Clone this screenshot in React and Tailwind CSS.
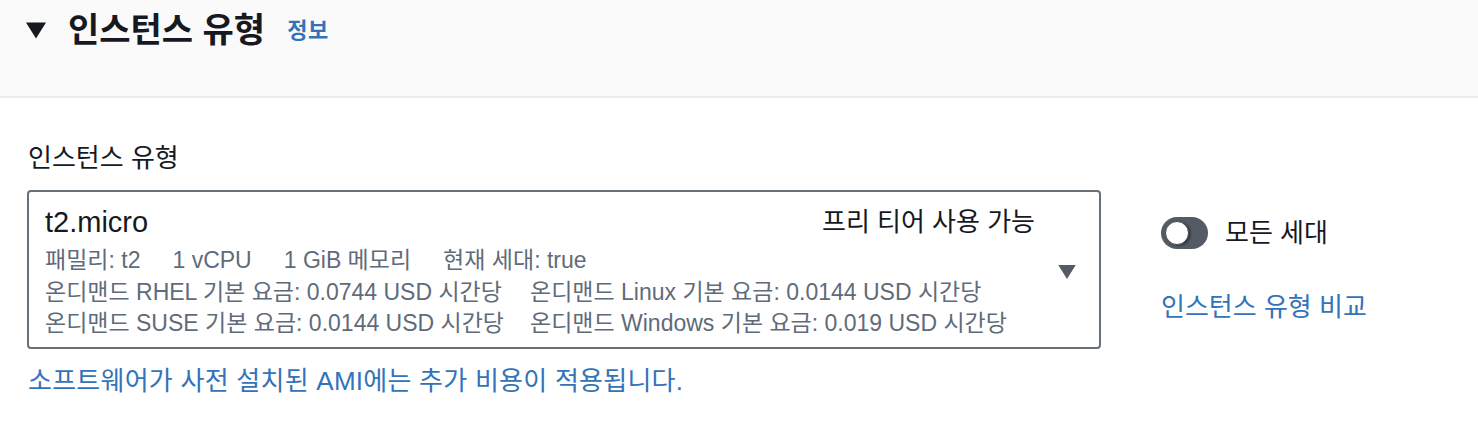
const FONT = { fontFamily: '"Liberation Sans", "Noto Sans CJK KR", sans-serif' };

function Caret({ className }) {
  return (
    <svg viewBox="0 0 20 16" className={className} fill="currentColor">
      <path d="M0 0 L20 0 L10 16 Z" />
    </svg>
  );
}

export default function App() {
  return (
    <div className="w-[1478px] h-[430px] bg-white text-[#16191f]" style={FONT}>
      {/* Header */}
      <div className="h-[98px] bg-[#fafafa] border-b-2 border-[#eaeded] flex items-start pt-[12px] pl-[26px]">
        <div className="flex items-center h-[36px]">
          <Caret className="w-[20px] h-[17px] text-[#16191f]" />
          <h2 className="ml-[22px] text-[34px] font-bold leading-[36px]">인스턴스 유형</h2>
          <a className="ml-[22px] text-[22px] font-bold tracking-[0.5px] text-[#3273b9] leading-[36px] pt-[2px]">정보</a>
        </div>
      </div>

      {/* Body */}
      <div className="pl-[27px] pt-[44px]">
        <div className="text-[26px] leading-[32px] mb-[16px] pl-[1px]">인스턴스 유형</div>

        <div className="flex items-start gap-[60px]">
          <div>
            <div className="w-[1074px] border-2 border-[#687078] rounded-[4px] flex items-center pl-[16px] pr-[22px] pt-[12px] pb-[7px]">
              <div className="flex-1">
                <div className="flex justify-between items-center leading-[36px]">
                  <span className="text-[29px]">t2.micro</span>
                  <span className="text-[26px]">프리 티어 사용 가능</span>
                </div>
                <div className="mt-[5px] text-[23px] leading-[31.5px] text-[#5f6b7a]">
                  <div className="flex gap-[32px]">
                    <span>패밀리: t2</span>
                    <span>1 vCPU</span>
                    <span>1 GiB 메모리</span>
                    <span>현재 세대: true</span>
                  </div>
                  <div className="grid grid-cols-[485px_auto]">
                    <span>온디맨드 RHEL 기본 요금: 0.0744 USD 시간당</span>
                    <span>온디맨드 Linux 기본 요금: 0.0144 USD 시간당</span>
                    <span>온디맨드 SUSE 기본 요금: 0.0144 USD 시간당</span>
                    <span>온디맨드 Windows 기본 요금: 0.019 USD 시간당</span>
                  </div>
                </div>
              </div>
              <Caret className="ml-[22px] w-[20px] h-[14px] text-[#545b64]" />
            </div>
            <a className="block mt-[14px] pl-[1px] text-[26px] tracking-[0.25px] leading-[36px] text-[#3273b9]">
              소프트웨어가 사전 설치된 AMI에는 추가 비용이 적용됩니다.
            </a>
          </div>

          <div className="pt-[25px]">
            <div className="flex items-center gap-[17px]">
              <div className="w-[47px] h-[32px] rounded-full bg-[#545b64] flex items-center pl-[4px]">
                <div className="w-[24px] h-[24px] rounded-full bg-white border border-[#414750] shadow-[2px_1px_2px_rgba(0,0,0,0.35)]" />
              </div>
              <span className="text-[26px] leading-[36px]">모든 세대</span>
            </div>
            <a className="block mt-[38px] text-[26px] leading-[36px] text-[#3273b9]">인스턴스 유형 비교</a>
          </div>
        </div>
      </div>
    </div>
  );
}
